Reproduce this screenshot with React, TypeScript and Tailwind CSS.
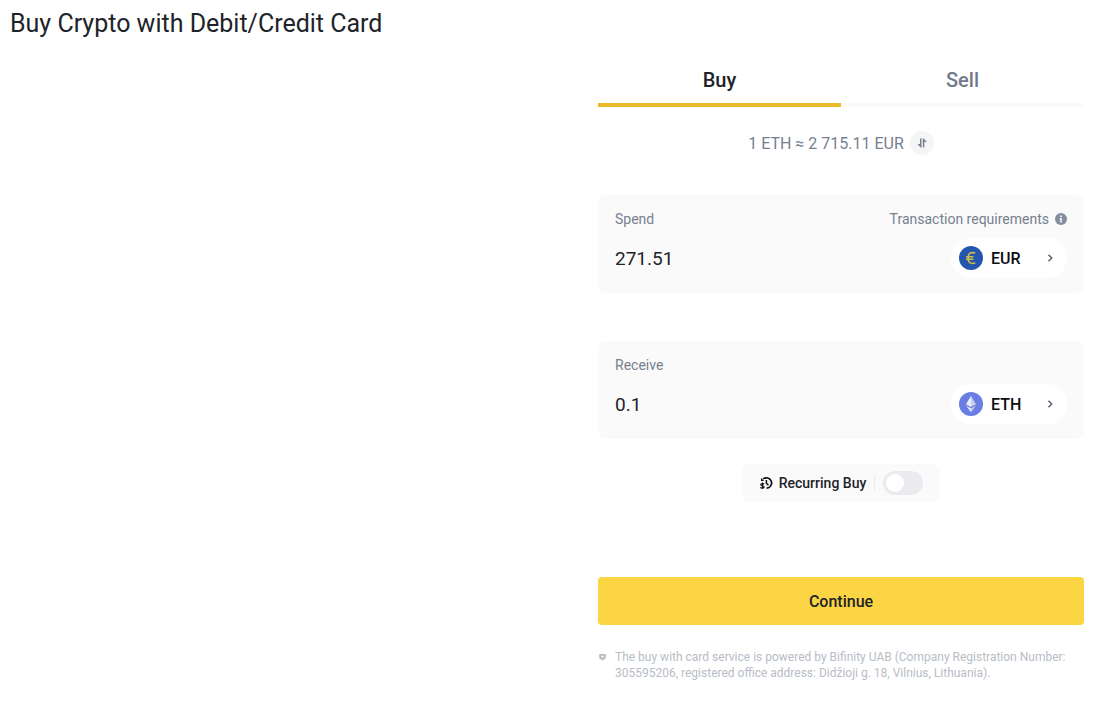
import { useState } from 'react';

function EuroIcon() {
  return (
    <svg width="24" height="24" viewBox="0 0 24 24" aria-hidden="true">
      <circle cx="12" cy="12" r="12" fill="#2456ad" />
      <path
        d="M16.2 7.3A5 5 0 0 0 13.6 6.5C10.8 6.5 9.2 8.8 9.2 12s1.6 5.5 4.4 5.5a5 5 0 0 0 2.6-.8M7 10.7h7.4M7 13.3h7.4"
        fill="none"
        stroke="#d3bd4f"
        strokeWidth="1.5"
      />
    </svg>
  );
}

function EthIcon() {
  return (
    <svg width="24" height="24" viewBox="0 0 24 24" aria-hidden="true">
      <circle cx="12" cy="12" r="12" fill="#6a7de2" />
      <path d="M12 4 7 12.2l5 2.8z" fill="#eceefa" />
      <path d="m12 4 5 8.2-5 2.8z" fill="#c9cff2" />
      <path d="m7 13.6 5 2.9v3.8z" fill="#eceefa" />
      <path d="m17 13.6-5 2.9v3.8z" fill="#c9cff2" />
    </svg>
  );
}

function Chevron() {
  return (
    <svg width="8" height="10" viewBox="0 0 8 10" aria-hidden="true">
      <path d="m1.5 1.8 3.2 3.2-3.2 3.2" fill="none" stroke="#5f6875" strokeWidth="1.6" />
    </svg>
  );
}

function SwapIcon() {
  return (
    <svg width="10" height="10" viewBox="0 0 10 10" aria-hidden="true">
      <path d="M4.5.5v9h-.9L.8 6.6V6H3V.5zM5.8 9.5v-9h.9l2.7 2.9V4H7.3v5.5z" fill="#76808f" />
    </svg>
  );
}

function InfoIcon() {
  return (
    <svg width="12" height="12" viewBox="0 0 12 12" aria-hidden="true">
      <circle cx="6" cy="6" r="6" fill="#848e9c" />
      <path d="M5.2 2.5h1.6V4H5.2zM4.7 5h2.1v4.5H5.2V6h-.5z" fill="#fafafa" />
    </svg>
  );
}

function RecurringIcon() {
  return (
    <svg width="14" height="14" viewBox="0 0 14 14" fill="none" aria-hidden="true">
      <path d="M4.2 2.9A5.2 5.2 0 1 1 7.600 12.200" stroke="#0b0e11" strokeWidth="1.7" />
      <path d="M2 2v3h3.200z" fill="#0b0e11" />
      <path d="M7.4 4v3.3l2 2" stroke="#0b0e11" strokeWidth="1.5" />
      <path
        d="M5.3 8.100C4.600 7.500 1.700 7.300 1.700 8.700c0 1.500 3.500.7 3.500 2.200 0 1.400-2.900 1.300-3.900.6M3.500 6.600v6.400"
        stroke="#0b0e11"
        strokeWidth="1.1"
      />
    </svg>
  );
}

function ShieldIcon() {
  return (
    <svg width="9" height="8" viewBox="0 0 9 8" className="shrink-0" aria-hidden="true">
      <path d="M1.200 1h6.600v4.200L4.500 7.500 1.200 5.200z" fill="#b7bdc6" />
      <path d="M4.500 2.200 5.900 3.600 4.500 5 3.100 3.600z" fill="#fff" />
    </svg>
  );
}

type AmountCardProps = {
  id: string;
  label: string;
  value: string;
  onChange: (value: string) => void;
  currency: string;
  icon: React.ReactNode;
  extra?: React.ReactNode;
};

function AmountCard({ id, label, value, onChange, currency, icon, extra }: AmountCardProps) {
  return (
    <div className="bg-[#fafafa] rounded-lg px-[17px] pt-3.5 pb-[15px]">
      <div className="flex items-center justify-between text-sm leading-5 text-[#76808f]">
        <label htmlFor={id}>{label}</label>
        {extra}
      </div>
      <div className="flex items-center justify-between mt-[9px]">
        <input
          id={id}
          className="min-w-0 flex-1 pt-0.5 bg-transparent text-[19px] text-[#1e2329] outline-none"
          value={value}
          onChange={(e) => onChange(e.target.value)}
          inputMode="decimal"
        />
        <button
          type="button"
          className="flex items-center w-[116px] h-10 pl-2 pr-3 rounded-full bg-white text-base font-medium text-[#0b0e11]"
        >
          {icon}
          <span className="ml-2 mr-auto pt-0.5">{currency}</span>
          <Chevron />
        </button>
      </div>
    </div>
  );
}

export default function App() {
  const [tab, setTab] = useState('buy');
  const [spend, setSpend] = useState('271.51');
  const [receive, setReceive] = useState('0.1');
  const [recurring, setRecurring] = useState(false);

  return (
    <div className="min-h-screen bg-white font-[Roboto,sans-serif] pt-2 pb-6 pl-2.5 pr-[35px]">
      <h1 className="text-[25px] leading-8 font-normal text-[#1e2329]">Buy Crypto with Debit/Credit Card</h1>

      <main className="ml-auto mt-5 w-full max-w-[486px]">
        <div className="grid grid-cols-2" role="tablist">
          <button
            type="button"
            role="tab"
            aria-selected={tab === 'buy'}
            onClick={() => setTab('buy')}
            className={`h-[47px] pb-1 border-b-4 text-xl font-medium ${
              tab === 'buy' ? 'border-[#ecb928] text-[#1e2329]' : 'border-[#fafafa] text-[#707a8a]'
            }`}
          >
            Buy
          </button>
          <button
            type="button"
            role="tab"
            aria-selected={tab === 'sell'}
            onClick={() => setTab('sell')}
            className={`h-[47px] pb-1 border-b-4 text-xl font-medium ${
              tab === 'sell' ? 'border-[#ecb928] text-[#1e2329]' : 'border-[#fafafa] text-[#707a8a]'
            }`}
          >
            Sell
          </button>
        </div>

        <div className="flex items-center justify-center gap-1.5 mt-6 text-base leading-6 text-[#76808f]">
          <span className="pt-0.5 leading-[22px]">1 ETH ≈ 2 715.11 EUR</span>
          <button
            type="button"
            aria-label="Swap rate"
            className="flex items-center justify-center size-6 rounded-full bg-[#f5f5f5]"
          >
            <SwapIcon />
          </button>
        </div>

        <div className="flex flex-col gap-12 mt-10">
          <AmountCard
            id="spend"
            label="Spend"
            value={spend}
            onChange={setSpend}
            currency="EUR"
            icon={<EuroIcon />}
            extra={
              <button type="button" className="flex items-center gap-1.5">
                Transaction requirements
                <InfoIcon />
              </button>
            }
          />
          <AmountCard
            id="receive"
            label="Receive"
            value={receive}
            onChange={setReceive}
            currency="ETH"
            icon={<EthIcon />}
          />
        </div>

        <div className="flex justify-center mt-[25px]">
          <label className="flex items-center h-[38px] px-[17px] rounded-lg bg-[#fafafa] text-sm font-medium text-[#1e2329]">
            <RecurringIcon />
            <span className="ml-1.5 pr-2">Recurring Buy</span>
            <span className="h-4 border-l border-[#eaecef] mr-2" />
            <input
              type="checkbox"
              role="switch"
              checked={recurring}
              onChange={(e) => setRecurring(e.target.checked)}
              className="appearance-none flex items-center w-10 h-6 px-[3px] rounded-full bg-[#eaebef] checked:bg-[#fcd545] checked:justify-end before:size-[18px] before:rounded-full before:bg-white before:content-['']"
            />
          </label>
        </div>

        <button
          type="button"
          className="w-full h-12 mt-[75px] pt-0.5 rounded bg-[#fcd545] text-base font-medium text-[#1e2329]"
        >
          Continue
        </button>

        <div className="flex items-start gap-2 mt-6 text-xs leading-4 text-[#b7bdc6]">
          <span className="flex items-center h-4 shrink-0">
            <ShieldIcon />
          </span>
          <p>
            The buy with card service is powered by Bifinity UAB (Company Registration Number: 305595206, registered
            office address: Didžioji g. 18, Vilnius, Lithuania).
          </p>
        </div>
      </main>
    </div>
  );
}
